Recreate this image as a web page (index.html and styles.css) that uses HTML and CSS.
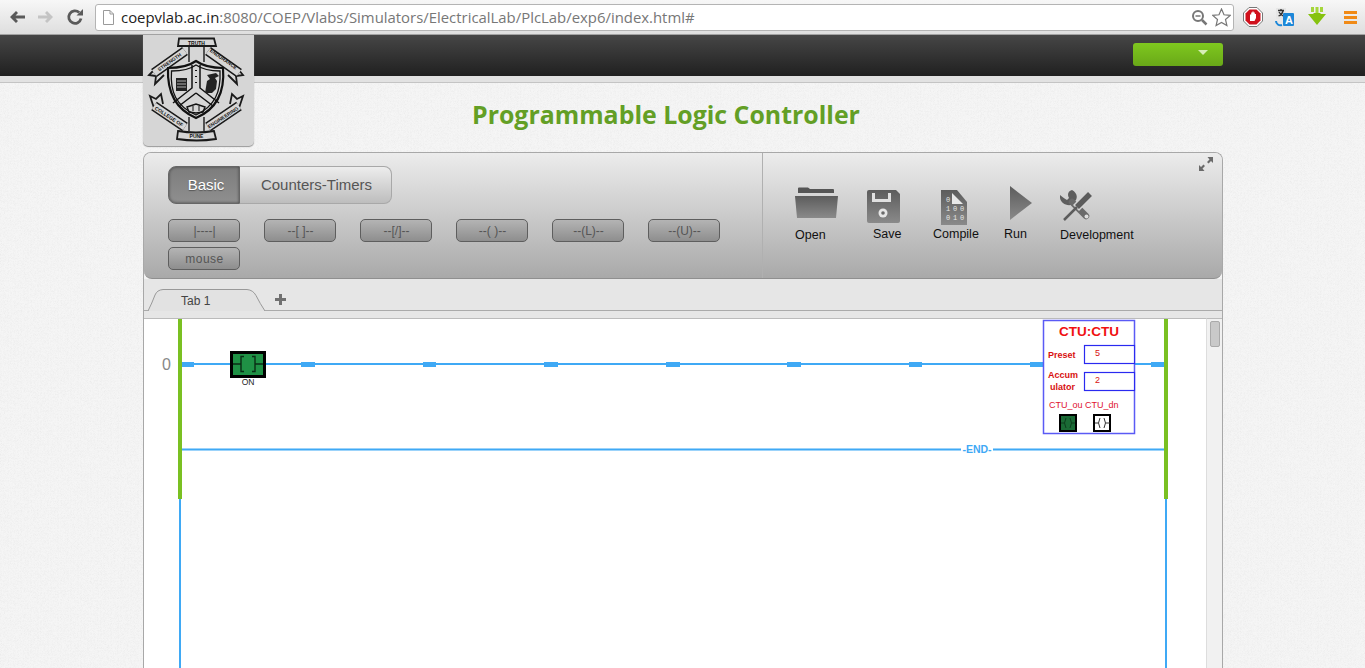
FILE: index.html
```html
<!DOCTYPE html>
<html>

<head>
    <meta charset="utf-8">
    <title>Programmable Logic Controller</title>
    <link rel="stylesheet" href="styles.css">
</head>

<body>
    <!-- browser toolbar -->
    <div class="chrome">
        <svg class="nav" width="18" height="18" viewBox="0 0 18 18"><path d="M2 9l6-6 2 2-2.500 2.500H17v3H7.500L10 13l-2 2z" fill="#5a5a5a"/></svg>
        <svg class="nav" width="18" height="18" viewBox="0 0 18 18"><path d="M16 9l-6-6-2 2 2.500 2.500H1v3h9.500L8 13l2 2z" fill="#c4c4c4"/></svg>
        <svg class="nav" width="18" height="18" viewBox="0 0 18 18"><path d="M15 10.500A6.200 6.200 0 1 1 13.200 4.600" fill="none" stroke="#5a5a5a" stroke-width="2.800"/><path d="M10.500 7.500h6.500V1z" fill="#5a5a5a"/></svg>
        <div class="urlbox">
            <svg class="pageicon" width="11" height="15" viewBox="0 0 11 15"><path d="M.5.500h6.500l3.500 3.500v10.500H.5z" fill="#fff" stroke="#9a9a9a"/><path d="M7 .500V4h3.500" fill="none" stroke="#9a9a9a"/></svg>
            <div class="url"><b>coepvlab.ac.in</b>:8080/COEP/Vlabs/Simulators/ElectricalLab/PlcLab/exp6/index.html#</div>
            <svg class="zoomicon" width="17" height="17" viewBox="0 0 17 17"><circle cx="7" cy="7" r="5" fill="none" stroke="#777" stroke-width="2"/><path d="M4.500 7h5" stroke="#777" stroke-width="1.500"/><path d="M11 11l4.500 4.500" stroke="#777" stroke-width="2.500"/></svg>
            <svg width="19" height="19" viewBox="0 0 19 19"><path d="M9.500 1l2.500 5.800 6.200.6-4.700 4.100 1.400 6.100-5.400-3.200-5.400 3.200 1.400-6.100L.8 7.400 7 6.800z" fill="#fff" stroke="#777" stroke-width="1.200"/></svg>
        </div>
        <svg class="ext" width="20" height="20" viewBox="0 0 20 20"><path d="M6 .500h8L19.500 6v8L14 19.500H6L.5 14V6z" fill="#fff" stroke="#777"/><path d="M6.500 2.500h7l4 4v7l-4 4h-7l-4-4v-7z" fill="#d0101c"/><path d="M7 14V7.500h1.200V5.500h1.200v-1h1.200v1h1.200V7h1.200v4l-1.500 3z" fill="#fff"/></svg>
        <svg class="ext" width="20" height="20" viewBox="0 0 20 20"><rect x="1" y="1" width="10" height="11" fill="#e6e6e6"/><path d="M3 3.500h6M6 2v2M3.500 9c3-1 4-3 4.500-5M4 5c1 2 3 3.500 5 4.500" fill="none" stroke="#333" stroke-width="1.300"/><rect x="8" y="6" width="11" height="13" rx="1" fill="#1c87d8"/><text class="ext-a" x="10" y="16.500">A</text><path d="M1 14c0 3 3 5 6 4" fill="none" stroke="#1c87d8" stroke-width="2"/></svg>
        <svg class="ext" width="20" height="20" viewBox="0 0 20 20"><path d="M4 0h3v5H4zM13 0h3v5h-3zM8.500 0h3v6h-3z" fill="#a5d63a"/><path d="M1 7h5.500v-1h7v1H19l-9 11z" fill="#86c20f"/></svg>
        <div class="menu"><i></i><i></i><i></i></div>
    </div>

    <!-- dark site bar -->
    <div class="sitebar">
        <div class="wrap sitebar-in">
            <div class="userbtn"><span class="caret"></span></div>
        </div>
    </div>
    <div class="substrip"></div>

    <div class="wrap page">
        <div class="logo">
            <svg width="111" height="111" viewBox="0 0 111 111">
                <!-- scroll behind the ribbons -->
                <path d="M46 11V27M61 11V27M46 82V96M61 82V96" stroke="#1a1a1a" stroke-width="1.400" fill="none"/>
                <g fill="#d6d6d6" stroke="#1a1a1a" stroke-width="1.800">
                    <path d="M12 34l-6 6 7 1-1 8 9-9"/>
                    <path d="M95 34l5 6-7 1 1 8-9-9"/>
                    <path d="M12 76l-5-15 6 3 5-5 2 10"/>
                    <path d="M95 76l5-15-6 3-5-5-2 10"/>
                </g>
                <g fill="none">
                    <path d="M11 38L42 16M65 16L96 38M11 71L42 92M65 92L96 71" stroke="#1a1a1a" stroke-width="10"/>
                    <path d="M11 38L42 16M65 16L96 38M11 71L42 92M65 92L96 71" stroke="#d6d6d6" stroke-width="7"/>
                </g>
                <path d="M36 3.500h35l2 7.500H35z" fill="#d6d6d6" stroke="#1a1a1a" stroke-width="1.800"/>
                <path d="M35 96q18 3 36 0l2 8q-19 3-39 0z" fill="#d6d6d6" stroke="#1a1a1a" stroke-width="1.800"/>
                <text class="logo-t" x="53.500" y="9.500" text-anchor="middle">TRUTH</text>
                <text class="logo-t" x="53.500" y="102.500" text-anchor="middle">PUNE</text>
                <text class="logo-t" transform="translate(27.500 28.500) rotate(-35)" text-anchor="middle">STRENGTH</text>
                <text class="logo-t" transform="translate(79.500 25.500) rotate(35)" text-anchor="middle">ENDURANCE</text>
                <text class="logo-t" transform="translate(25 83) rotate(33)" text-anchor="middle">COLLEGE OF</text>
                <text class="logo-t" transform="translate(81 84) rotate(-33)" text-anchor="middle">ENGINEERING</text>
                <path d="M25 33c10 0 21-2 28-7 7 5 18 7 27 7 2 24-6 41-27 50-21-9-29-26-28-50z" fill="#d6d6d6" stroke="#111" stroke-width="2.200"/>
                <path d="M28.500 36c9 0 19-2 24.500-6 6 4 16 6 24 6 1 21-5 35-24 44-20-9-26-23-24.500-44z" fill="none" stroke="#111" stroke-width="1.300"/>
                <path d="M49 30V53L30 68M57 30V53L76 68M53 58L36 71M53 58L70 71" fill="none" stroke="#111" stroke-width="1.500"/>
                <path d="M53 35v1M53 41v1M53 47v1" stroke="#111" stroke-width="2"/>
                <path d="M33 43h11v13H33z" fill="#222"/>
                <path d="M34 46h9M34 49h9M34 52h9" stroke="#d6d6d6" stroke-width=".8"/>
                <path d="M62 58l2-12 3-2-3-4 9-2 3 3-4 2 2 3-1 8-4 4z" fill="#222"/>
                <path d="M44 72l9-3 9 3-2 5-7 1-7-1z" fill="none" stroke="#111" stroke-width="1.400"/>
                <path d="M50 71v5M56 71v5" stroke="#111"/>
            </svg>
        </div>
        <h1 class="title">Programmable Logic Controller</h1>

        <div class="panel">
            <div class="toolbar">
                <div class="tools-left">
                    <div class="segs">
                        <div class="seg seg-on">Basic</div>
                        <div class="seg seg-off">Counters-Timers</div>
                    </div>
                    <div class="parts">
                        <div class="part">|----|</div>
                        <div class="part">--[ ]--</div>
                        <div class="part">--[/]--</div>
                        <div class="part">--( )--</div>
                        <div class="part">--(L)--</div>
                        <div class="part">--(U)--</div>
                        <div class="part part-mouse">mouse</div>
                    </div>
                </div>
                <div class="tools-right">
                    <div class="tool tool-open">
                        <svg width="44" height="33" viewBox="0 0 44 33">
                            <defs><linearGradient id="ig" x1="0" y1="0" x2="0" y2="1"><stop offset="0" stop-color="#5c5c5c"/><stop offset="1" stop-color="#8a8a8a"/></linearGradient></defs>
                            <path d="M3 7V2.500q0-1 1-1h9l2 1.500h23q1 0 1 1v3z" fill="#555"/>
                            <path d="M0 10h43l-2 22H2z" fill="url(#ig)"/>
                        </svg>
                        <span>Open</span>
                    </div>
                    <div class="tool tool-save">
                        <svg width="33" height="33" viewBox="0 0 33 33">
                            <path d="M2 0h27l4 4v27q0 2-2 2H2q-2 0-2-2V2q0-2 2-2z" fill="url(#ig)"/>
                            <path d="M5 3h3v6h13V3h3v9H5z" fill="#e0e0e0"/>
                            <circle cx="16" cy="23" r="4.500" fill="#e6e6e6"/><circle cx="16" cy="23" r="1.800" fill="#6a6a6a"/>
                        </svg>
                        <span>Save</span>
                    </div>
                    <div class="tool tool-compile">
                        <svg width="27" height="35" viewBox="0 0 27 35">
                            <path d="M0 0h16l10 12v23H0z" fill="url(#ig)"/>
                            <path d="M11 3l11 11H11z" fill="#e8e8e8"/>
                            <text class="bits" x="5" y="12">0</text>
                            <text class="bits" x="5" y="20.500">1</text><text class="bits" x="12" y="20.500">0</text><text class="bits" x="19" y="20.500">0</text>
                            <text class="bits" x="5" y="29.500">0</text><text class="bits" x="12" y="29.500">1</text><text class="bits" x="19" y="29.500">0</text>
                        </svg>
                        <span>Compile</span>
                    </div>
                    <div class="tool tool-run">
                        <svg width="22" height="34" viewBox="0 0 22 34"><path d="M0 0l22 17L0 34z" fill="url(#ig)"/></svg>
                        <span>Run</span>
                    </div>
                    <div class="tool tool-dev">
                        <svg width="33" height="33" viewBox="0 0 33 33" fill="none">
                            <path d="M12 0C8 1 7 5 9 8L7 10C4 8 2 7 0 5-1 11 4 16 11 15L16 10C18 6 16 2 12 0z" fill="#5e5e5e"/>
                            <path d="M12 12L26 26" stroke="#6a6a6a" stroke-width="6.500" stroke-linecap="round"/>
                            <path d="M30 4L16 18" stroke="#d4d4d4" stroke-width="8.500"/>
                            <path d="M30 4L17 17" stroke="#5c5c5c" stroke-width="5.500"/>
                            <path d="M17 17L4 30" stroke="#5c5c5c" stroke-width="2.500"/>
                            <circle cx="26.500" cy="26.500" r="2" fill="#ddd"/>
                        </svg>
                        <span>Development</span>
                    </div>
                    <svg class="expand" width="16" height="16" viewBox="0 0 16 16"><path d="M15 1v6l-2-2-2.500 2.500-1.500-1.500L11.500 3.500 9.500 1zM1 15V9l2 2 2.500-2.500 1.500 1.500L4.500 12.500 6.500 15z" fill="#6a6a6a"/></svg>
                </div>
            </div>

            <div class="tabbar">
                <div class="tab">
                    <svg width="117" height="22" viewBox="0 0 117 22"><path d="M0 22Q4 14 7 6 9 1 15 .5h84q6 .5 9 6 4 8 9 15.500" fill="#e2e2e2" stroke="#999"/></svg>
                    <span class="tab-name">Tab 1</span>
                </div>
                <svg class="plus" width="11" height="11" viewBox="0 0 11 11"><path d="M4 0h3v4h4v3H7v4H4V7H0V4h4z" fill="#707070"/></svg>
            </div>

            <div class="editor">
                <div class="canvas">
                    <svg class="ladder" width="1062" height="349" viewBox="144 319 1062 349">
                        <!-- rails -->
                        <rect x="179" y="319" width="2" height="349" fill="#3fa9f5"/>
                        <rect x="1165" y="319" width="2" height="349" fill="#3fa9f5"/>
                        <rect x="178" y="319" width="4" height="180" fill="#7ac022"/>
                        <rect x="1164" y="319" width="4" height="180" fill="#7ac022"/>
                        <!-- rung 0 -->
                        <text class="rungno" x="162" y="370">0</text>
                        <rect x="182" y="363" width="982" height="2" fill="#3fa9f5"/>
                        <g fill="#3fa9f5">
                            <rect x="182" y="362" width="12" height="5"/>
                            <rect x="301" y="362" width="14" height="5"/>
                            <rect x="423" y="362" width="13" height="5"/>
                            <rect x="544" y="362" width="14" height="5"/>
                            <rect x="666" y="362" width="14" height="5"/>
                            <rect x="787" y="362" width="14" height="5"/>
                            <rect x="909" y="362" width="13" height="5"/>
                            <rect x="1030" y="362" width="14" height="5"/>
                            <rect x="1151" y="362" width="13" height="5"/>
                        </g>
                        <!-- contact -->
                        <rect x="231.500" y="352.500" width="33" height="24" fill="#1f9145" stroke="#000" stroke-width="3"/>
                        <path d="M233 364h8M255 364h8M244 356.500h-3v15h3M252 356.500h3v15h-3" fill="none" stroke="#0a2d15" stroke-width="1.400"/>
                        <text class="on" x="248" y="384.500" text-anchor="middle">ON</text>
                        <!-- counter block -->
                        <rect x="1043.500" y="320.500" width="91" height="113" fill="#fff" stroke="#5a5af5" stroke-width="1.500"/>
                        <text class="ctu-title" x="1089" y="335.500" text-anchor="middle">CTU:CTU</text>
                        <text class="ctu-lbl" x="1048" y="358">Preset</text>
                        <rect x="1084.500" y="345.500" width="50" height="18" fill="#fff" stroke="#2a2af0" stroke-width="1.200"/>
                        <text class="ctu-val" x="1095" y="355.500">5</text>
                        <text class="ctu-lbl" x="1048" y="378">Accum</text>
                        <text class="ctu-lbl" x="1050" y="390">ulator</text>
                        <rect x="1084.500" y="372.500" width="50" height="18" fill="#fff" stroke="#2a2af0" stroke-width="1.200"/>
                        <text class="ctu-val" x="1095" y="382.500">2</text>
                        <text class="ctu-pin" x="1049" y="408">CTU_ou</text>
                        <text class="ctu-pin" x="1085" y="408">CTU_dn</text>
                        <rect x="1060" y="415" width="16" height="16" fill="#1a6a35" stroke="#000" stroke-width="2"/>
                        <path d="M1061 423h3M1072 423h3M1066 418q-3 5 0 10M1070 418q3 5 0 10" fill="none" stroke="#0c3d1d"/>
                        <rect x="1094" y="415" width="16" height="16" fill="#fff" stroke="#000" stroke-width="2"/>
                        <path d="M1095 423h3M1106 423h4M1100 418q-3 5 0 10M1104 418q3 5 0 10" fill="none" stroke="#333"/>
                        <!-- end rung -->
                        <rect x="182" y="448" width="982" height="3" fill="#9cd3fa"/>
                        <rect x="182" y="449" width="982" height="1" fill="#3fa9f5"/>
                        <rect x="961" y="446" width="32" height="7" fill="#fff"/>
                        <text class="endtxt" x="977" y="453" text-anchor="middle">-END-</text>
                    </svg>
                </div>
                <div class="scrollbar"><div class="thumb"></div></div>
            </div>
        </div>
    </div>
</body>

</html>
```

FILE: styles.css
```css
html,
body {
    margin: 0;
    height: 668px;
    overflow: hidden;
}

body {
    background: #f6f6f6 url("data:image/svg+xml,%3Csvg xmlns='http://www.w3.org/2000/svg' width='200' height='200'%3E%3Cfilter id='n'%3E%3CfeTurbulence baseFrequency='.7' numOctaves='2'/%3E%3CfeColorMatrix values='0 0 0 0 0 0 0 0 0 0 0 0 0 0 0 0 0 0 .05 0'/%3E%3C/filter%3E%3Crect width='200' height='200' filter='url(%23n)'/%3E%3C/svg%3E");
    font: 400 12px "Liberation Sans", Arial, sans-serif;
}

/* browser toolbar */
.chrome {
    display: flex;
    align-items: center;
    height: 34px;
    padding-left: 8px;
    background: linear-gradient(#f7f7f7, #dedede);
    border-bottom: 1px solid #a2a2a2;
}

.nav {
    margin-right: 11px;
}

.urlbox {
    display: flex;
    align-items: center;
    box-sizing: border-box;
    width: 1139px;
    height: 27px;
    margin: 0 9px 0 0;
    padding: 0 2px 0 7px;
    background: #fff;
    border: 1px solid #b4b4b4;
    border-radius: 3px;
}

.pageicon {
    flex: none;
}

.url {
    flex: 1;
    margin-left: 7px;
    color: #777;
    font: 400 14.900px "Open Sans", sans-serif;
    white-space: nowrap;
}

.url b {
    color: #222;
    font-weight: 400;
}

.zoomicon {
    margin-right: 4px;
}

.ext {
    margin-right: 12px;
}

.ext-a {
    fill: #fff;
    font: 700 11px "Liberation Sans", sans-serif;
}

.menu {
    display: flex;
    flex-direction: column;
    gap: 2px;
    margin-left: 5px;
}

.menu i {
    display: block;
    width: 13px;
    height: 3px;
    background: #f08a16;
}

/* site header */
.wrap {
    width: 1080px;
    margin-left: 143px;
}

.sitebar {
    height: 41px;
    background: linear-gradient(#464646, #202020);
}

.sitebar-in {
    display: flex;
    justify-content: flex-end;
    padding-top: 8px;
}

.userbtn {
    position: relative;
    width: 90px;
    height: 23px;
    background: linear-gradient(#7fc81f, #69a818);
    border-radius: 3px;
}

.caret {
    position: absolute;
    top: 7px;
    right: 15px;
    border: 5px solid transparent;
    border-top: 5px solid #d8eeb8;
    border-bottom: 0;
}

.substrip {
    height: 6px;
    background: #e2e2e2;
    border-bottom: 1px solid #c4c4c4;
}

.page {
    position: relative;
}

.logo {
    position: absolute;
    top: -48px;
    left: 0;
    width: 111px;
    height: 111px;
    background: #d6d6d6;
    border-radius: 0 0 5px 5px;
    box-shadow: 0 1px 1px #999;
}

.title {
    height: 69px;
    margin: 0;
    padding-left: 329px;
    color: #639f25;
    font: 700 24.900px/63px "Open Sans", sans-serif;
    white-space: nowrap;
}

/* panel */
.panel {
    box-sizing: border-box;
    width: 1080px;
    border: 1px solid #a8a8a8;
    border-bottom: 0;
    border-radius: 8px 8px 0 0;
}

.toolbar {
    display: flex;
    height: 125px;
    background: linear-gradient(#ececec, #a9a9a9);
    border-bottom: 1px solid #8f8f8f;
    border-radius: 7px 7px 8px 8px;
}

.tools-left {
    box-sizing: border-box;
    width: 619px;
    padding: 13px 0 0 24px;
    border-right: 1px solid #b0b0b0;
}

.segs {
    display: flex;
    width: 224px;
    height: 38px;
}

.seg {
    box-sizing: border-box;
    font-size: 15px;
    line-height: 36px;
    text-align: center;
}

.seg-on {
    width: 72px;
    padding-left: 4px;
    color: #fff;
    background: linear-gradient(#7d7d7d, #8f8f8f);
    border: 1px solid #666;
    border-radius: 8px 0 0 8px;
    box-shadow: inset 0 0 3px #444;
    text-shadow: 0 1px 1px #555;
}

.seg-off {
    width: 152px;
    padding-left: 2px;
    color: #555;
    background: linear-gradient(#ededed, #bdbdbd);
    border: 1px solid #a8a8a8;
    border-left: 0;
    border-radius: 0 8px 8px 0;
}

.parts {
    display: flex;
    flex-wrap: wrap;
    gap: 5px 24px;
    margin-top: 15px;
}

.part {
    box-sizing: border-box;
    width: 72px;
    height: 23px;
    padding-left: 1px;
    color: #555;
    font-size: 12px;
    line-height: 22px;
    text-align: center;
    background: linear-gradient(#b4b4b4, #8e8e8e);
    border: 1px solid #5e5e5e;
    border-radius: 5px;
}

.part-mouse {
    letter-spacing: .5px;
}

.tools-right {
    position: relative;
    flex: 1;
    display: flex;
    align-items: flex-start;
}

.tool {
    display: flex;
    flex-direction: column;
    align-items: flex-start;
    color: #111;
    font-size: 12.500px;
}

.tool-open {
    width: 72px;
    padding: 33px 0 0 32px;
}

.tool-open span {
    margin-top: 9px;
}

.tool-save {
    width: 66px;
    padding-top: 37px;
}

.tool-save span {
    margin: 4px 0 0 6px;
}

.tool-compile {
    width: 77px;
    padding-top: 37px;
}

.tool-compile svg {
    margin-left: 8px;
}

.tool-compile span {
    margin-top: 2px;
}

.tool-run {
    width: 50px;
    padding-top: 33px;
}

.tool-run span {
    margin: 7px 0 0 -6px;
}

.tool-dev {
    padding-top: 37px;
}

.tool-dev span {
    margin-top: 5px;
}

.expand {
    position: absolute;
    top: 3px;
    right: 8px;
}

.bits {
    fill: #e6e6e6;
    font: 400 7px "Liberation Mono", monospace;
}

/* tabs */
.tabbar {
    display: flex;
    align-items: flex-end;
    box-sizing: border-box;
    height: 32px;
    padding-left: 4px;
    background: #e6e6e6;
    border-bottom: 1px solid #aaa;
}

.tab {
    position: relative;
    width: 117px;
    height: 22px;
    margin-bottom: -1px;
}

.tab-name {
    position: absolute;
    top: 5px;
    left: 33px;
    color: #444;
    font-size: 12px;
}

.plus {
    margin: 0 0 5px 10px;
}

/* editor */
.editor {
    display: flex;
    height: 357px;
    padding-top: 7px;
    box-sizing: border-box;
    background: #e6e6e6;
}

.canvas {
    width: 1062px;
    background: #fff;
    border-top: 1px solid #bbb;
}

.ladder {
    display: block;
}

.scrollbar {
    flex: 1;
    padding: 2px 0 0 3px;
    background: #f1f1f1;
    border-top: 1px solid #bbb;
    border-left: 1px solid #ddd;
}

.thumb {
    width: 10px;
    height: 26px;
    background: #c9c9c9;
    border: 1px solid #aaa;
    border-radius: 2px;
    box-sizing: border-box;
}

.rungno {
    fill: #888;
    font: 400 16px "Liberation Sans", sans-serif;
}

.on {
    fill: #222;
    font: 400 8.500px "Liberation Sans", sans-serif;
}

.ctu-title {
    fill: #f01010;
    font: 700 13.500px "Liberation Sans", sans-serif;
}

.ctu-lbl {
    fill: #d81010;
    font: 700 9px "Liberation Sans", sans-serif;
}

.ctu-val {
    fill: #d81010;
    font: 400 9px "Liberation Sans", sans-serif;
}

.ctu-pin {
    fill: #e01030;
    font: 400 9px "Liberation Sans", sans-serif;
}

.endtxt {
    fill: #3fa9f5;
    font: 700 10.500px "Liberation Sans", sans-serif;
}

.logo-t {
    fill: #111;
    font: 700 5px "Liberation Sans", sans-serif;
}
```
